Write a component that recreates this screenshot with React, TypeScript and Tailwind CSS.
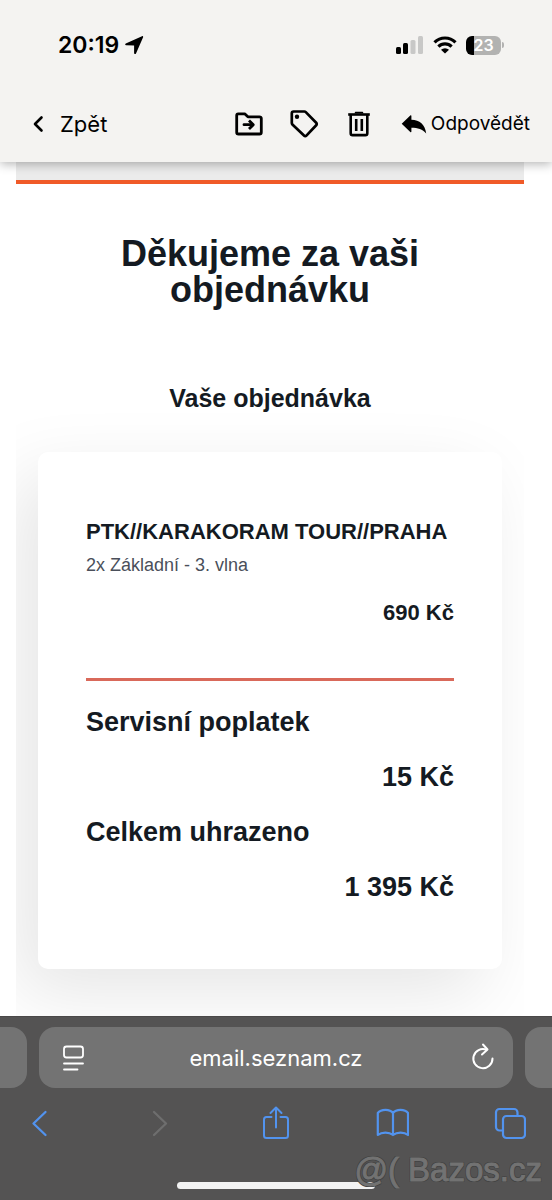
import React, { useState } from 'react'

interface Polozka {
  nazev: string;
  cena: string;
}

const souhrn: Polozka[] = [
  { nazev: 'Servisní poplatek', cena: '15 Kč' },
  { nazev: 'Celkem uhrazeno', cena: '1 395 Kč' },
];

function StatusBar() {
  return (
    <div className="flex h-9 items-center justify-between pl-[58px] pr-12">
      <div className="flex items-center gap-1.5">
        <span className="text-[23px] font-semibold leading-7">20:19</span>
        <svg width="20" height="20" viewBox="0 0 20 20" aria-hidden="true">
          <path d="M.8 8.400 17 1.200c.8-.3 1.400.3 1.100 1.100L11 18.400c-.4.9-1.900.7-1.900-.4V10.600L1.200 10.300C0 10.200-.2 8.900.8 8.400z" />
        </svg>
      </div>
      <div className="flex items-center gap-[9px]">
        <svg width="28" height="18" viewBox="0 0 28 18" aria-hidden="true">
          <rect x="0" y="11" width="5" height="7" rx="1.5" />
          <rect x="7" y="7" width="5" height="11" rx="1.5" />
          <rect x="14.5" y="4" width="5" height="14" rx="1.5" fill="#c8c8c7" />
          <rect x="22" y="0" width="5" height="18" rx="1.5" fill="#c8c8c7" />
        </svg>
        <svg width="24" height="18" viewBox="0 0 24 18" aria-hidden="true">
          <g fill="none" stroke="#000" strokeWidth="3.200">
            <path d="M1.500 6.300a15 15 0 0 1 21 0" />
            <path d="M5.400 10.600a9.400 9.400 0 0 1 13.200 0" />
          </g>
          <path d="M12 17.600 8 13.800a5.800 5.800 0 0 1 8 0z" />
        </svg>
        <div className="flex items-center gap-px">
          <div className="flex h-[19px] w-[35px] items-center justify-center rounded-md bg-linear-to-r from-black from-[8px] to-[#b2b2b1] to-[8px] text-base font-semibold leading-5 text-white">
            23
          </div>
          <div className="h-1.5 w-0.5 rounded-r-full bg-[#b2b2b1]" />
        </div>
      </div>
    </div>
  )
}

function Toolbar() {
  return (
    <div className="flex items-center pb-[22px] pl-7 pr-[22px] pt-[45px]">
      <button type="button" className="flex items-center gap-3 text-[22px] leading-8">
        <svg width="20" height="20" viewBox="0 0 20 20" fill="none" stroke="#000" strokeWidth="2.600" strokeLinecap="round" strokeLinejoin="round" aria-hidden="true">
          <path d="M13.500 3.500 7 10l6.500 6.500" />
        </svg>
        Zpět
      </button>
      <div className="ml-auto flex items-center gap-[23px]">
        <button type="button" aria-label="Přesunout">
          <svg width="32" height="32" viewBox="0 0 32 32" fill="none" stroke="#000" strokeWidth="2.800" strokeLinejoin="round" aria-hidden="true">
            <path d="M5.300 5.800h6.400l3.200 3H26.500a1.800 1.800 0 0 1 1.800 1.800v13.600a1.800 1.800 0 0 1-1.800 1.800h-21a1.800 1.800 0 0 1-1.800-1.800V7.500a1.700 1.700 0 0 1 1.600-1.700z" />
            <path d="M11 16.700h8" strokeLinecap="round" />
            <path d="m16 12.400 4.300 4.300-4.300 4.300" />
          </svg>
        </button>
        <button type="button" aria-label="Štítek">
          <svg width="32" height="32" viewBox="0 0 32 32" fill="none" stroke="#000" strokeWidth="2.700" strokeLinejoin="round" aria-hidden="true">
            <path d="M5.600 3.500h10.700c.6 0 1.100.2 1.500.6l10.400 10.700c.7.7.7 1.700 0 2.400L18.400 27.600c-.7.7-1.700.7-2.400 0L4.400 16.600c-.4-.4-.6-.9-.6-1.500V5.300c0-1 .8-1.800 1.800-1.800z" />
            <circle cx="9" cy="8.700" r="2.200" fill="#000" stroke="none" />
          </svg>
        </button>
        <button type="button" aria-label="Smazat">
          <svg width="32" height="32" viewBox="0 0 32 32" fill="none" stroke="#000" strokeWidth="2.600" aria-hidden="true">
            <path d="M5.200 6.500h21.600" />
            <path d="M11.500 5.500c.3-1.500.6-1.800 1.500-1.800h6c.9 0 1.200.3 1.500 1.800z" fill="#000" stroke="none" />
            <path d="M7.700 7v18.200c0 1.100.8 1.900 1.900 1.900h12.800c1.100 0 1.900-.8 1.900-1.900V7" />
            <path d="M13.200 11v12M18.800 11v12" />
          </svg>
        </button>
      </div>
      <button type="button" className="ml-[26px] flex items-center gap-1 text-[19px] leading-8">
        <svg width="26" height="20" viewBox="0 0 26 20" aria-hidden="true">
          <path d="M.7 9.800 9.300 1.600c.6-.5 1.100-.3 1.100.5v3.600c8.300.2 13.600 4.600 14.800 13.800C21.400 15.200 17 13.800 10.400 13.800v3.800c0 .8-.5 1-1.100.5z" />
        </svg>
        Odpovědět
      </button>
    </div>
  )
}

function Objednavka() {
  return (
    <section className="mx-[22px] rounded-[10px] bg-white px-12 pb-16 pt-[66px] shadow-[-20px_24px_72px_rgba(0,0,0,0.1)]">
      <h3 className="text-[22px] font-bold leading-7">PTK//KARAKORAM TOUR//PRAHA</h3>
      <p className="mt-[7px] text-lg leading-6 text-[#4a4f5a]">2x Základní - 3. vlna</p>
      <p className="mt-[22px] text-right text-[22px] font-bold leading-7">690 Kč</p>
      <hr className="mb-[23px] mt-[51px] border-0 border-t-3 border-[#d9695a]" />
      <dl className="text-[27px] font-bold leading-9">
        {souhrn.map((p) => (
          <div key={p.nazev} className="mb-[19px] last:mb-0">
            <dt>{p.nazev}</dt>
            <dd className="mt-[19px] text-right">{p.cena}</dd>
          </div>
        ))}
      </dl>
    </section>
  )
}

function BrowserBar() {
  const [url, setUrl] = useState('email.seznam.cz');

  return (
    <footer className="relative h-[184px] border-t border-[#4a4848] bg-[#545353] pt-2.5 text-white">
      <div className="flex h-[61px] gap-3">
        <div className="w-[27px] rounded-r-2xl bg-[#737373]" />
        <div className="flex min-w-0 flex-1 items-center rounded-2xl bg-[#737373] px-4">
          <button type="button" aria-label="Nastavení stránky">
            <svg width="32" height="32" viewBox="0 0 32 32" fill="none" stroke="#fff" strokeWidth="1.800" strokeLinecap="round" aria-hidden="true">
              <rect x="9" y="4.500" width="19" height="11" rx="2.500" />
              <path d="M9 21.500h19M9 27.500h13.500" />
            </svg>
          </button>
          <input
            type="text"
            aria-label="Adresa"
            value={url}
            onChange={(e) => setUrl(e.target.value)}
            className="min-w-0 flex-1 text-center text-[22px] leading-7 focus:outline-none"
          />
          <button type="button" aria-label="Načíst znovu">
            <svg width="32" height="32" viewBox="0 0 32 32" fill="none" stroke="#fff" strokeWidth="2" strokeLinecap="round" strokeLinejoin="round" aria-hidden="true">
              <path d="M27.500 16.500A9.600 9.600 0 1 1 21.500 7.700" />
              <path d="m18 2.500 4.500 5-5.500 5" />
            </svg>
          </button>
        </div>
        <div className="w-[27px] rounded-l-2xl bg-[#737373]" />
      </div>
      <nav className="mt-[18px] flex items-center justify-between pl-6 pr-[26px]">
        <button type="button" aria-label="Zpět v historii">
          <svg width="32" height="34" viewBox="0 0 32 34" fill="none" stroke="#5293ee" strokeWidth="2.300" strokeLinecap="round" strokeLinejoin="round" aria-hidden="true">
            <path d="M21.500 6 9.500 17.500l12 11.500" />
          </svg>
        </button>
        <button type="button" aria-label="Vpřed v historii">
          <svg width="32" height="34" viewBox="0 0 32 34" fill="none" stroke="#6e6e6e" strokeWidth="2.300" strokeLinecap="round" strokeLinejoin="round" aria-hidden="true">
            <path d="m13 6 12 11.500L13 29" />
          </svg>
        </button>
        <button type="button" aria-label="Sdílet">
          <svg width="32" height="34" viewBox="0 0 32 34" fill="none" stroke="#5293ee" strokeWidth="2" strokeLinecap="round" strokeLinejoin="round" aria-hidden="true">
            <path d="M13.500 11H8.500A2.500 2.500 0 0 0 6 13.500v16A2.500 2.500 0 0 0 8.500 32h19a2.500 2.500 0 0 0 2.500-2.500v-16a2.500 2.500 0 0 0-2.500-2.500h-5" />
            <path d="M18 21.500V1.500M12.500 7 18 1.500 23.500 7" />
          </svg>
        </button>
        <button type="button" aria-label="Záložky">
          <svg width="34" height="34" viewBox="0 0 34 34" fill="none" stroke="#5293ee" strokeWidth="2.200" strokeLinejoin="round" aria-hidden="true">
            <path d="M18 7C15 2.800 6 2.800 2.800 7v22c4-3.300 11.200-3.300 15.200 0 4-3.300 11.200-3.300 15 0V7C30 2.800 21 2.800 18 7zM18 7v22" />
          </svg>
        </button>
        <button type="button" aria-label="Panely">
          <svg width="32" height="34" viewBox="0 0 32 34" fill="none" stroke="#5293ee" strokeWidth="2.200" aria-hidden="true">
            <path d="M8.500 24.500H5.500A3.500 3.500 0 0 1 2 21V6.500A3.500 3.500 0 0 1 5.500 3H20a3.500 3.500 0 0 1 3.500 3.500v3" />
            <rect x="9" y="10" width="22" height="22" rx="3.500" />
          </svg>
        </button>
      </nav>
      <div className="mx-auto mt-[42px] h-[7px] w-[198px] rounded-full bg-[#f2f2f2]" />
      <span className="absolute bottom-3 right-2.5 font-['Liberation_Sans',sans-serif] text-[33px] leading-9 text-[#727272] [-webkit-text-stroke:1px_#727272] [text-shadow:-1px_-1px_0_#434343,1px_-1px_0_#434343,-1px_1px_0_#434343,1px_1px_0_#434343]">
        @( Bazos.cz
      </span>
    </footer>
  )
}

export default function App() {
  return (
    <div className="flex min-h-screen flex-col bg-white font-['Inter',sans-serif] text-black">
      <header className="relative z-10 bg-[#f4f3f1] pt-[27px] shadow-[0_2px_10px_rgba(0,0,0,0.3)]">
        <StatusBar />
        <Toolbar />
      </header>
      <main className="ml-4 mr-7 flex-1 overflow-hidden pb-10 font-['Liberation_Sans',sans-serif] text-[#141a22]">
        <div className="h-[22px] border-b-4 border-[#f05a28] bg-[#ebebeb]" />
        <h1 className="mx-auto mt-[52px] max-w-80 text-center text-4xl font-bold leading-9">
          Děkujeme za vaši objednávku
        </h1>
        <h2 className="mb-[38px] mt-[74px] text-center text-[25px] font-bold leading-8">Vaše objednávka</h2>
        <Objednavka />
      </main>
      <BrowserBar />
    </div>
  )
}
